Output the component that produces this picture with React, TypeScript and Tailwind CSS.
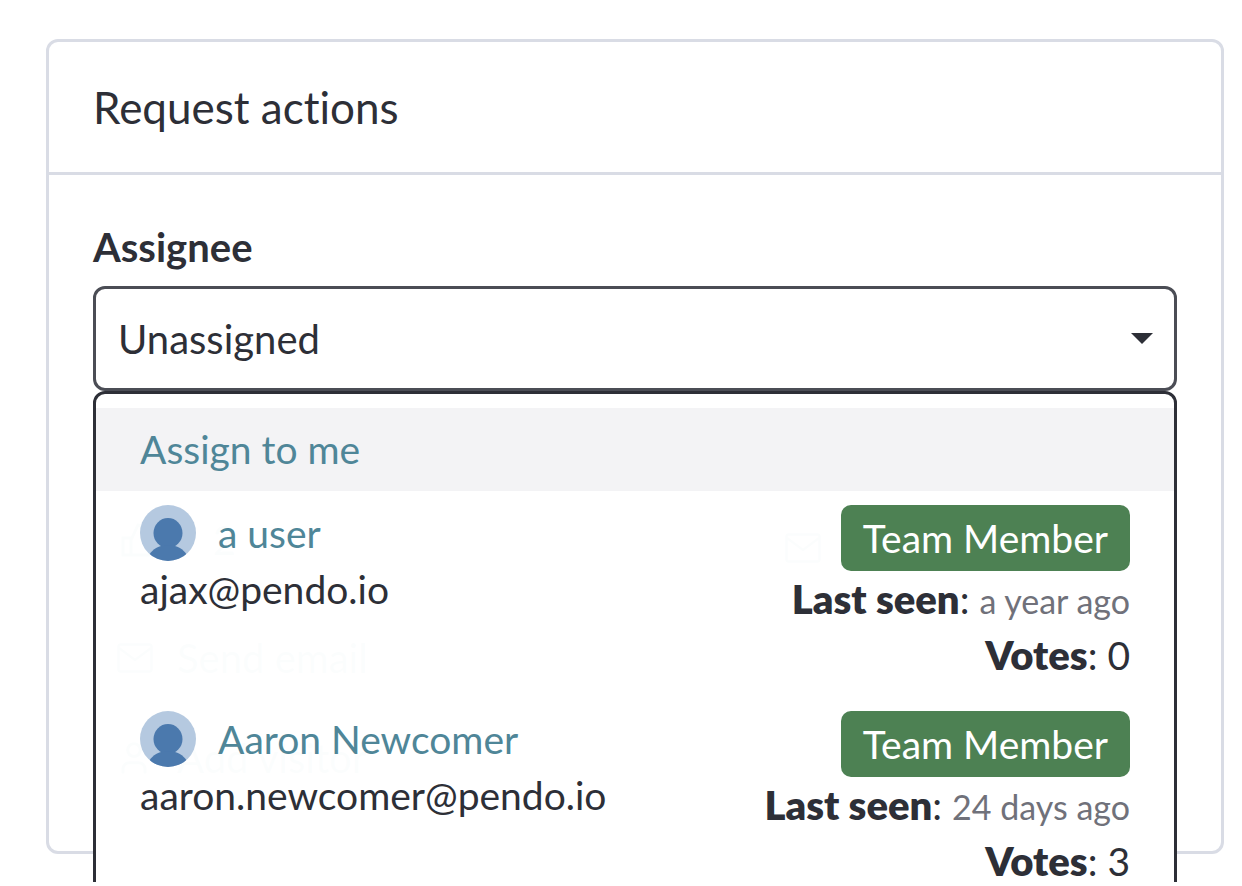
import { useState } from 'react';
import { User } from 'lucide-react';

interface Member {
  name: string;
  email: string;
  role: string;
  lastSeen: string;
  votes: number;
}

const MEMBERS: Member[] = [
  { name: 'a user', email: 'ajax@pendo.io', role: 'Team Member', lastSeen: 'a year ago', votes: 0 },
  {
    name: 'Aaron Newcomer',
    email: 'aaron.newcomer@pendo.io',
    role: 'Team Member',
    lastSeen: '24 days ago',
    votes: 3,
  },
];

function Avatar() {
  return (
    <svg
      viewBox="0 0 56 56"
      className="size-14 shrink-0 overflow-hidden rounded-full bg-[#b5c9e0]"
      fill="#4b79ad"
      aria-hidden="true"
    >
      <ellipse cx="28" cy="28" rx="14.5" ry="15" />
      <path d="M9 50c4-6 10-9.5 15-9.5h8c5 0 11 3.500 15 9.500v6H9z" />
    </svg>
  );
}

function MailIcon() {
  return (
    <svg
      viewBox="0 0 36 30"
      className="h-[30px] w-9 shrink-0"
      fill="none"
      stroke="currentColor"
      strokeWidth="2.5"
      aria-hidden="true"
    >
      <rect x="1.500" y="1.500" width="33" height="27" rx="2" />
      <path d="M2 5l16 12L34 5" />
    </svg>
  );
}

function MemberOption({ member, onSelect }: { member: Member; onSelect: () => void }) {
  return (
    <li>
      <button
        type="button"
        onClick={onSelect}
        className="flex w-full items-start justify-between px-11 py-3.5 text-left"
      >
        <span className="flex flex-col">
          <span className="flex h-14 items-center gap-[22px]">
            <Avatar />
            <span className="text-[#4f8698]">{member.name}</span>
          </span>
          <span className="h-14 leading-14">{member.email}</span>
        </span>
        <span className="flex flex-col items-end leading-14">
          <span className="flex h-[66px] items-center rounded-[10px] bg-[#4d8153] px-[22px] text-white">
            {member.role}
          </span>
          <span className="h-14">
            <b className="text-[40px] font-extrabold">Last seen</b>:{' '}
            <span className="text-[34px] text-[#70717a]">{member.lastSeen}</span>
          </span>
          <span className="h-14">
            <b className="text-[40px] font-extrabold">Votes</b>: {member.votes}
          </span>
        </span>
      </button>
    </li>
  );
}

function RequestLinks() {
  return (
    <div className="pt-[104px] text-[40px] text-[#4f8698]">
      <div className="flex h-[90px] items-center justify-between">
        <div className="flex h-full w-[176px] rounded-lg border-3 border-[#d9dce5]">
          <button type="button" aria-label="Vote" className="flex flex-1 items-center justify-center">
            <svg viewBox="0 0 36 36" className="size-9" fill="none" stroke="currentColor" strokeWidth="3">
              <path d="M3 16h8v17H3zM11 18l7-15c5 0 5 4 4 10h10l-3 20H11" />
            </svg>
          </button>
          <span className="flex flex-1 items-center justify-center border-l-3 border-[#d9dce5]">2</span>
        </div>
        <button type="button" aria-label="Email voters" className="mt-4 mr-[356px]">
          <MailIcon />
        </button>
      </div>
      <a href="#email" className="mt-12 flex h-[50px] items-center gap-6 pl-6">
        <MailIcon />
        Send email
      </a>
      <a href="#visitor" className="mt-[50px] flex h-[50px] items-center gap-6 pl-[22px]">
        <User size={38} strokeWidth={2} />
        Add visitor
      </a>
    </div>
  );
}

export default function App() {
  const [assignee, setAssignee] = useState('Unassigned');

  return (
    <main className="overflow-hidden bg-white pt-[39px] pr-[18px] pb-7 pl-[46px] font-[Lato,sans-serif] text-[39px] text-[#2d2f37] [font-variant-ligatures:none]">
      <section className="rounded-xl border-3 border-[#d9dce5]">
        <h2 className="border-b-3 border-[#d9dce5] px-11 text-[44px] leading-[130px]">Request actions</h2>

        <div className="px-11 pt-12 pb-17">
          <label htmlFor="assignee" className="mb-[15px] block text-[40px] leading-12 font-bold">
            Assignee
          </label>

          <div className="relative">
            <select
              id="assignee"
              value={assignee}
              onChange={(e) => setAssignee(e.target.value)}
              className="block h-[105px] w-full appearance-none rounded-xl border-3 border-[#4b4d55] bg-white px-5.5 text-[40px]"
            >
              <option>Unassigned</option>
              {MEMBERS.map((member) => (
                <option key={member.email}>{member.name}</option>
              ))}
            </select>
            <svg
              viewBox="0 0 22 11"
              className="pointer-events-none absolute top-[47px] right-6 h-[11px] w-[22px]"
              fill="#2d2f37"
              aria-hidden="true"
            >
              <path d="M0 0h22L11 11z" />
            </svg>

            <ul className="absolute inset-x-0 top-full rounded-xl border-3 border-[#2d2f37] bg-white/98 pt-3.5 pb-14">
              <li>
                <button
                  type="button"
                  onClick={() => setAssignee(MEMBERS[0].name)}
                  className="block w-full bg-[#f3f3f5] px-11 text-left leading-[83px] text-[#4f8698]"
                >
                  Assign to me
                </button>
              </li>
              {MEMBERS.map((member) => (
                <MemberOption key={member.email} member={member} onSelect={() => setAssignee(member.name)} />
              ))}
            </ul>
          </div>

          <RequestLinks />
        </div>
      </section>
    </main>
  );
}
